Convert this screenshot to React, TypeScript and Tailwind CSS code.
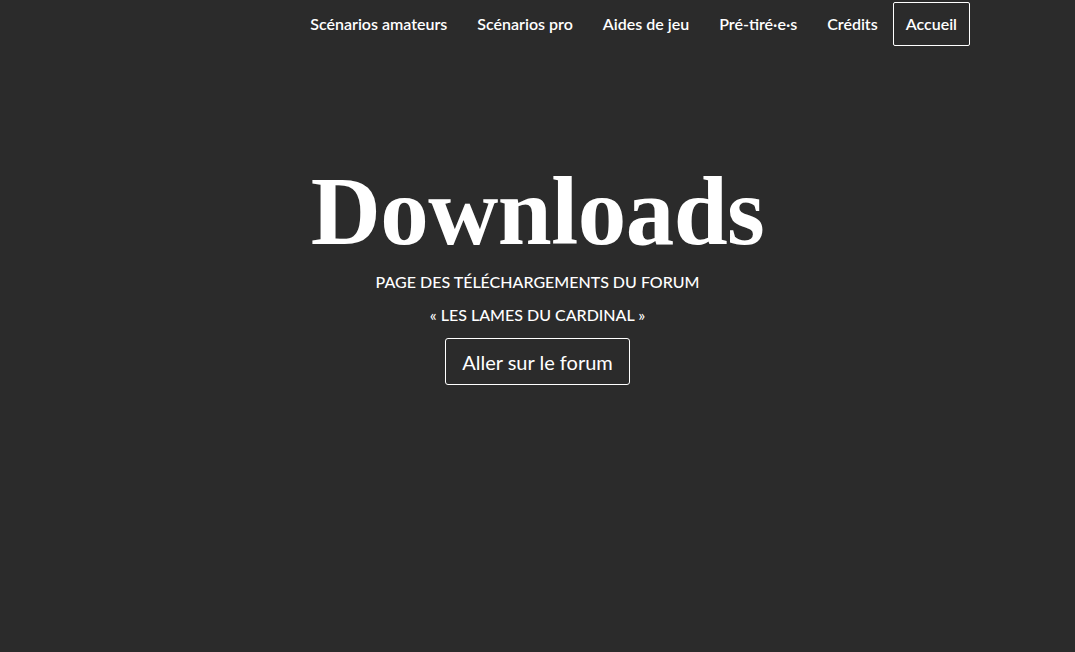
const navItems = ["Scénarios amateurs", "Scénarios pro", "Aides de jeu", "Pré-tiré·e·s", "Crédits"];

export default function App() {
  return (
    <div className="min-h-screen w-full bg-[#2b2b2b] text-white font-['Lato','Open_Sans',sans-serif]">
      <nav className="flex justify-end items-start pr-[105px] pt-[2px]">
        {navItems.map((item) => (
          <a key={item} href="#" className="px-[15px] h-[43px] flex items-center text-[16px] font-semibold text-white">
            {item}
          </a>
        ))}
        <a href="#" className="px-[12px] h-[44px] flex items-center text-[16px] font-semibold border border-white rounded-[2px]">
          Accueil
        </a>
      </nav>

      <header className="flex flex-col items-center pt-[116px]">
        <h1 className="font-['Liberation_Serif','Times_New_Roman',serif] font-bold text-[97px] leading-[100px] tracking-[-0.5px]">
          Downloads
        </h1>
        <p className="mt-[10px] text-[16px] leading-[20px] font-medium">PAGE DES TÉLÉCHARGEMENTS DU FORUM</p>
        <p className="mt-[13px] text-[16px] leading-[20px] font-medium">« LES LAMES DU CARDINAL »</p>
        <a href="#" className="mt-[13px] h-[47px] px-[16px] flex items-center text-[20px] border border-white rounded-[3px]">
          Aller sur le forum
        </a>
      </header>
    </div>
  );
}
